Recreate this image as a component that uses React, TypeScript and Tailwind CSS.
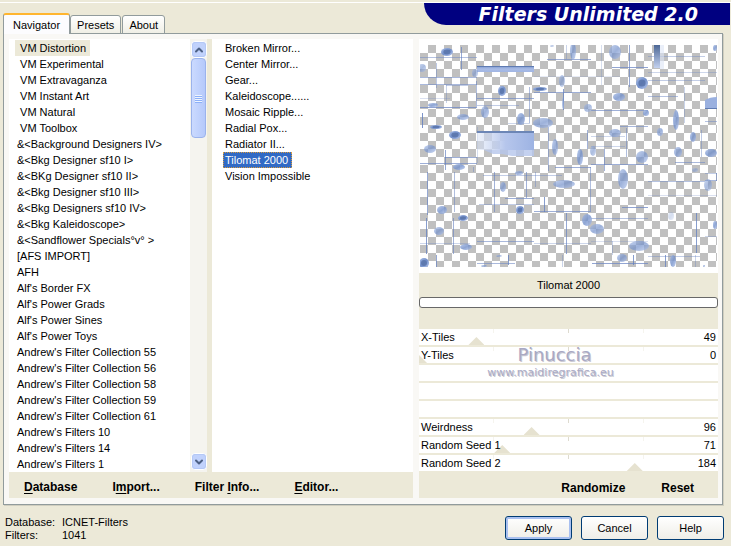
import { useState } from "react";
import { ChevronDown, ChevronUp } from "lucide-react";
import clsx from "clsx";

const CATEGORIES = [
  " VM Distortion",
  " VM Experimental",
  " VM Extravaganza",
  " VM Instant Art",
  " VM Natural",
  " VM Toolbox",
  "&<Background Designers IV>",
  "&<Bkg Designer sf10 I>",
  "&<BKg Designer sf10 II>",
  "&<Bkg Designer sf10 III>",
  "&<Bkg Designers sf10 IV>",
  "&<Bkg Kaleidoscope>",
  "&<Sandflower Specials°v° >",
  "[AFS IMPORT]",
  "AFH",
  "Alf's Border FX",
  "Alf's Power Grads",
  "Alf's Power Sines",
  "Alf's Power Toys",
  "Andrew's Filter Collection 55",
  "Andrew's Filter Collection 56",
  "Andrew's Filter Collection 58",
  "Andrew's Filter Collection 59",
  "Andrew's Filter Collection 61",
  "Andrew's Filters 10",
  "Andrew's Filters 14",
  "Andrew's Filters 1",
];

const FILTERS = [
  "Broken Mirror...",
  "Center Mirror...",
  "Gear...",
  "Kaleidoscope......",
  "Mosaic Ripple...",
  "Radial Pox...",
  "Radiator II...",
  "Tilomat 2000",
  "Vision Impossible",
];

const PARAMS = [
  { name: "X-Tiles", value: 49 },
  { name: "Y-Tiles", value: 0 },
  null,
  null,
  null,
  { name: "Weirdness", value: 96 },
  { name: "Random Seed 1", value: 71 },
  { name: "Random Seed 2", value: 184 },
];

// cx, cy, rx, ry, opacity
const BLOBS = [
  [27, 7, 6, 4, 1], [2, 23, 4, 4, 0.6], [55, 28, 3, 4, 0.6], [82, 46, 4, 5, 1],
  [13, 60, 5, 2, 0.8], [43, 72, 6, 3, 0.7], [16, 82, 6, 2, 1], [35, 90, 6, 4, 1],
  [10, 104, 6, 4, 0.7], [65, 67, 4, 6, 0.7], [101, 74, 4, 6, 0.8], [120, 44, 7, 2, 1],
  [123, 78, 10, 5, 0.7], [153, 6, 3, 9, 0.7], [142, 36, 3, 6, 0.6], [143, 58, 1, 6, 0.6],
  [195, 7, 6, 7, 0.7], [222, 38, 6, 6, 1], [199, 52, 6, 4, 0.8], [168, 63, 4, 4, 0.6],
  [226, 68, 3, 3, 0.8], [256, 75, 3, 10, 0.8], [195, 88, 6, 4, 0.7], [240, 87, 3, 4, 0.7],
  [273, 92, 3, 5, 0.8], [135, 102, 3, 8, 0.7], [295, 3, 2, 3, 0.8], [173, 106, 3, 5, 0.6],
  [39, 122, 6, 3, 0.8], [160, 112, 3, 8, 0.8], [222, 112, 6, 6, 0.7], [258, 107, 4, 5, 0.7],
  [291, 108, 6, 4, 0.8], [99, 128, 4, 2, 0.7], [83, 142, 3, 5, 0.7], [144, 139, 11, 4, 0.7],
  [203, 134, 5, 10, 0.7], [288, 140, 4, 6, 0.6], [275, 125, 3, 2, 0.5], [22, 165, 5, 4, 0.8],
  [100, 165, 4, 4, 1], [43, 173, 5, 3, 1], [19, 186, 5, 4, 0.7], [46, 202, 6, 3, 0.8],
  [4, 218, 5, 5, 1], [167, 175, 5, 6, 0.8], [177, 184, 7, 5, 0.7], [219, 201, 10, 5, 0.7],
  [202, 213, 5, 4, 0.7], [253, 216, 3, 6, 0.8], [295, 180, 2, 4, 0.8], [251, 171, 3, 4, 0.3],
  [79, 211, 3, 1, 0.6], [64, 221, 3, 1, 0.7], [284, 221, 1, 1, 0.7], [132, 1, 2, 1, 0.5],
];

// y, x1, x2, opacity
const H_LINES = [
  [12, 0, 57, 0.6], [32, 0, 57, 0.7], [39, 0, 57, 0.7], [40, 26, 48, 0.5], [62, 0, 57, 0.9],
  [53, 0, 30, 0.3], [53, 57, 114, 0.8], [60, 57, 99, 0.5], [78, 88, 110, 0.4],
  [14, 127, 171, 0.8], [47, 114, 171, 0.8], [22, 192, 228, 0.9], [31, 114, 200, 0.2],
  [11, 228, 285, 0.5], [27, 228, 297, 0.4], [35, 228, 285, 0.5], [51, 228, 258, 0.6],
  [65, 171, 228, 0.8], [81, 200, 228, 0.7], [91, 171, 205, 0.4], [76, 285, 297, 0.6],
  [112, 25, 57, 0.8], [118, 0, 57, 0.8], [101, 171, 205, 0.4], [122, 135, 171, 0.8],
  [119, 171, 228, 0.8], [117, 255, 285, 0.7], [130, 63, 142, 0.5], [136, 228, 285, 0.6],
  [150, 228, 297, 0.3], [128, 285, 297, 0.5], [153, 85, 114, 0.8], [159, 59, 114, 0.5],
  [166, 114, 171, 0.8], [162, 202, 228, 0.9], [173, 171, 228, 0.6], [196, 57, 114, 0.7],
  [198, 114, 171, 0.4], [198, 0, 50, 0.4], [196, 171, 228, 0.3], [211, 228, 280, 0.5],
  [218, 57, 95, 0.7], [218, 172, 228, 0.9], [191, 285, 297, 0.4], [135, 285, 297, 0.7],
];

// x, y1, y2, opacity
const V_LINES = [
  [41, 2, 25, 0.8], [16, 18, 43, 0.5], [26, 40, 58, 0.4], [56, 36, 62, 0.6], [2, 68, 83, 1],
  [109, 42, 78, 0.6], [143, 44, 65, 0.9], [209, 0, 42, 0.8], [181, 0, 40, 0.3], [146, 0, 14, 0.4],
  [264, 42, 78, 0.4], [128, 82, 126, 0.6], [167, 85, 104, 0.7], [206, 83, 112, 0.6],
  [184, 104, 126, 0.7], [281, 85, 112, 0.5], [25, 105, 125, 0.8], [57, 82, 118, 0.3],
  [7, 127, 170, 0.8], [6, 173, 209, 0.9], [34, 127, 167, 0.6], [33, 173, 209, 0.7],
  [74, 127, 167, 0.7], [106, 127, 153, 0.7], [115, 127, 142, 0.5], [170, 122, 166, 0.6],
  [124, 152, 167, 0.9], [146, 168, 209, 0.8], [276, 168, 208, 0.9], [16, 210, 222, 0.8],
  [88, 210, 220, 0.9], [213, 210, 220, 0.9], [245, 210, 222, 0.9], [275, 210, 222, 0.4],
  [192, 196, 210, 0.4], [142, 210, 222, 0.4], [53, 122, 127, 0.5], [296, 128, 136, 0.6],
];

function Preview() {
  return (
    <svg viewBox="0 0 297 222" className="block w-full" role="img" aria-label="Filter preview">
      <defs>
        <pattern id="checker" width="16" height="16" patternUnits="userSpaceOnUse">
          <path d="M0 0h16v16H0z" fill="#fff" />
          <path d="M8 0h8v8H8zM0 8h8v8H0z" fill="#c0c0c0" />
        </pattern>
        <linearGradient id="blob" x1="0" y1="0" x2="1" y2="1">
          <stop offset="0" stopColor="#a9bee8" />
          <stop offset="0.5" stopColor="#728fc9" />
          <stop offset="1" stopColor="#b4c6ee" />
        </linearGradient>
        <linearGradient id="bar" x1="0" y1="0" x2="0" y2="1">
          <stop offset="0" stopColor="#7b97cd" />
          <stop offset="0.5" stopColor="#a9bce6" />
          <stop offset="1" stopColor="#a0b5e3" />
        </linearGradient>
        <linearGradient id="block" x1="0" y1="0" x2="1" y2="0">
          <stop offset="0" stopColor="#dbe4f6" stopOpacity="0.5" />
          <stop offset="0.5" stopColor="#b6c6ec" />
          <stop offset="1" stopColor="#9db3e3" />
        </linearGradient>
        <linearGradient id="column" x1="0" y1="0" x2="0" y2="1">
          <stop offset="0" stopColor="#4c6795" />
          <stop offset="1" stopColor="#c3d1ef" />
        </linearGradient>
        <filter id="soft" x="-30%" y="-30%" width="160%" height="160%">
          <feGaussianBlur stdDeviation="0.6" />
        </filter>
      </defs>
      <rect width="297" height="222" fill="url(#checker)" />
      {H_LINES.map(([y, x1, x2, o], i) => (
        <rect key={i} x={x1} y={y} width={x2 - x1} height="1" fill="#7089c4" opacity={o * 0.85} />
      ))}
      {V_LINES.map(([x, y1, y2, o], i) => (
        <rect key={i} x={x} y={y1} width="1" height={y2 - y1} fill="#6480bf" opacity={o * 0.85} />
      ))}
      <rect x="57" y="21" width="57" height="6" fill="url(#bar)" />
      <rect x="57" y="21" width="57" height="1" fill="#5f7bb2" />
      <rect x="57" y="87" width="57" height="18" fill="url(#block)" />
      <path d="M64 105h50v6H92l-10-2h-9z" fill="#b5c5eb" opacity="0.8" />
      <rect x="57" y="86" width="57" height="2" fill="#6c86b6" />
      <rect x="234" y="0" width="6" height="23" fill="url(#column)" />
      <rect x="240" y="0" width="4" height="24" fill="#dce4f5" opacity="0.6" />
      <path d="M285 55q5-3 12-3v11h-12z" fill="#9ab0df" />
      <path d="M285 63h12v1h-12z" fill="#5f7bb2" />
      <g filter="url(#soft)">
        {BLOBS.map(([cx, cy, rx, ry, o], i) => (
          <g key={i} opacity={o}>
            <ellipse cx={cx} cy={cy} rx={rx} ry={ry} fill="url(#blob)" />
            {o === 1 && (
              <ellipse cx={cx} cy={cy} rx={rx * 0.6} ry={ry * 0.6} fill="#5672a8" opacity="0.8" />
            )}
          </g>
        ))}
      </g>
    </svg>
  );
}

function ScrollBar() {
  const arrow =
    "flex h-[17px] w-4 items-center justify-center rounded-sm border border-white bg-[#c1d2fc] text-[#4d6185] outline outline-[#b4c8f6] -outline-offset-2";
  return (
    <div className="flex w-[17px] flex-col items-center bg-[#f5f4ef] py-0.5">
      <button type="button" aria-label="Scroll up" className={arrow}>
        <ChevronUp size={12} strokeWidth={4} />
      </button>
      <div className="flex h-20 w-[15px] flex-col items-center justify-center gap-px rounded-sm border border-[#9bb3ec] bg-linear-to-r from-[#cbdafe] to-[#b5c9fb]">
        {[0, 1, 2, 3].map((n) => (
          <span key={n} className="h-px w-[7px] bg-[#eef4fe] shadow-[0_1px_0_#8cb0f8]" />
        ))}
      </div>
      <div className="flex-1" />
      <button type="button" aria-label="Scroll down" className={arrow}>
        <ChevronDown size={12} strokeWidth={4} />
      </button>
    </div>
  );
}

function ParamRow({ param }: { param: { name: string; value: number } | null }) {
  const [value, setValue] = useState(param ? param.value : 0);
  if (!param) return <div className="h-4 bg-white" />;
  return (
    <label className="relative flex h-4 items-center justify-between overflow-hidden bg-white px-0.5">
      <span className="absolute inset-x-0 top-0 flex justify-evenly">
        <span className="h-1 w-px bg-[#f5f4ee]" />
        <span className="h-1 w-px bg-[#dedbd0]" />
        <span className="h-1 w-px bg-[#f5f4ee]" />
      </span>
      <input
        type="range"
        min={0}
        max={255}
        value={value}
        onChange={(e) => setValue(Number(e.target.value))}
        className="absolute -inset-x-2 bottom-0 h-2 appearance-none bg-transparent outline-none [&::-webkit-slider-thumb]:h-2 [&::-webkit-slider-thumb]:w-4 [&::-webkit-slider-thumb]:appearance-none [&::-webkit-slider-thumb]:bg-[#e6e2d0] [&::-webkit-slider-thumb]:[clip-path:polygon(50%_0,100%_100%,0_100%)]"
      />
      <span className="relative">{param.name}</span>
      <span className="relative">{value}</span>
    </label>
  );
}

// label with one underlined accelerator letter
function BarButton({ label, hot }: { label: string; hot?: number }) {
  return (
    <button type="button" className="text-xs font-bold">
      {hot === undefined ? (
        label
      ) : (
        <>
          {label.slice(0, hot)}
          <span className="underline underline-offset-2">{label[hot]}</span>
          {label.slice(hot + 1)}
        </>
      )}
    </button>
  );
}

function DialogButton({ label, primary }: { label: string; primary?: boolean }) {
  return (
    <button
      type="button"
      className={clsx(
        "h-6 w-[67px] rounded-[3px] border border-[#003c74] bg-linear-to-b from-white to-[#efeee8]",
        primary && "shadow-[inset_0_0_0_2px_#a9c0f0]"
      )}
    >
      {label}
    </button>
  );
}

export default function App() {
  const [tab, setTab] = useState("Navigator");
  const [category, setCategory] = useState(CATEGORIES[0]);
  const [filter, setFilter] = useState("Tilomat 2000");

  return (
    <div className="min-h-screen bg-[#ece9d8] font-['Liberation_Sans',Arial,sans-serif] text-[11px] leading-4 text-black">
      <div className="h-[3px] border-b border-white" />
      <header className="flex h-[30px] items-end justify-between pl-[3px]">
        <div role="tablist" className="relative -mb-px flex items-end">
          {["Navigator", "Presets", "About"].map((t) => (
            <button
              key={t}
              type="button"
              role="tab"
              aria-selected={tab === t}
              onClick={() => setTab(t)}
              className={clsx(
                "rounded-t-[3px] border border-[#919b9c] leading-4",
                tab === t
                  ? "h-[21px] border-t-2 border-b-0 border-t-[#ffb52e] bg-[#fcfcfe] px-[9px]"
                  : "mr-px h-[19px] bg-linear-to-b from-white to-[#f0efe6] px-1.5"
              )}
            >
              {t}
            </button>
          ))}
        </div>
        <h1 className="mr-px h-[22px] w-[42%] self-start rounded-bl-[24px] bg-[#000080] pr-8 text-right font-['DejaVu_Sans',sans-serif] text-[19px] leading-[22px] font-bold whitespace-nowrap text-white italic">
          Filters Unlimited 2.0
        </h1>
      </header>

      <main className="mr-2 ml-[3px] flex gap-1.5 border border-[#919b9c] bg-[#f9f8f5] pt-[5px] pr-1 pb-1.5 pl-[5px] shadow-[1px_1px_0_#d0cebf]">
        <section className="flex min-w-0 flex-[404_1_0%] flex-col">
          <div className="flex">
            <ul className="min-w-0 flex-[175_1_0%] bg-white pt-px pl-1.5">
              {CATEGORIES.map((c) => (
                <li key={c} className="h-4">
                  <button
                    type="button"
                    onClick={() => setCategory(c)}
                    className={clsx(
                      "h-4 pr-1 pl-0.5 whitespace-pre",
                      category === c && "bg-[#ece9d8]"
                    )}
                  >
                    {c}
                  </button>
                </li>
              ))}
            </ul>
            <ScrollBar />
            <ul className="min-w-0 flex-[190_1_0%] border-l-[5px] border-[#ece9d8] bg-white pt-px pl-[11px]">
              {FILTERS.map((f) => (
                <li key={f} className="h-4">
                  <button
                    type="button"
                    onClick={() => setFilter(f)}
                    className={clsx(
                      "h-4 pr-1 pl-0.5",
                      filter === f &&
                        "bg-[#316ac5] text-white outline-1 -outline-offset-1 outline-dotted outline-[#d99a3c]"
                    )}
                  >
                    {f}
                  </button>
                </li>
              ))}
            </ul>
          </div>
          <div className="flex h-[26px] items-center gap-[35px] bg-[#ece9d8] pt-1 pl-[15px]">
            <BarButton label="Database" hot={0} />
            <BarButton label="Import..." hot={1} />
            <BarButton label="Filter Info..." hot={7} />
            <BarButton label="Editor..." hot={0} />
          </div>
        </section>

        <section className="flex min-w-0 flex-[299_1_0%] flex-col">
          <div className="bg-white px-px pt-1.5 pb-1.5">
            <Preview />
          </div>
          <div className="bg-[#ece9d8] pt-1 pb-[21px] text-center">
            {filter}
            <div
              role="progressbar"
              aria-label="Rendering progress"
              aria-valuenow={0}
              className="mt-1 h-[11px] rounded-[3px] border border-[#686868] bg-white"
            />
          </div>
          <div className="relative flex flex-col gap-0.5 bg-[#ece9d8]">
            {PARAMS.map((p, i) => (
              <ParamRow key={i} param={p} />
            ))}
            <div className="pointer-events-none absolute inset-x-0 top-4 pr-9 text-center font-['Comic_Sans_MS','DejaVu_Sans',sans-serif] text-[#a9a9c4] [text-shadow:1px_1px_0_#77778c66]">
              <p className="pl-2 text-lg leading-5">Pinuccia</p>
              <p>www.maidiregrafica.eu</p>
            </div>
          </div>
          <div className="flex flex-1 items-center justify-end gap-9 bg-[#ece9d8] pt-1.5 pr-6">
            <BarButton label="Randomize" />
            <BarButton label="Reset" />
          </div>
        </section>
      </main>

      <footer className="flex items-start justify-between pt-[11px] pr-[7px] pl-[5px]">
        <dl className="grid grid-cols-[57px_auto] leading-[13px]">
          <dt>Database:</dt>
          <dd>ICNET-Filters</dd>
          <dt>Filters:</dt>
          <dd>1041</dd>
        </dl>
        <div className="flex gap-[9px]">
          <DialogButton label="Apply" primary />
          <DialogButton label="Cancel" />
          <DialogButton label="Help" />
        </div>
      </footer>
    </div>
  );
}
